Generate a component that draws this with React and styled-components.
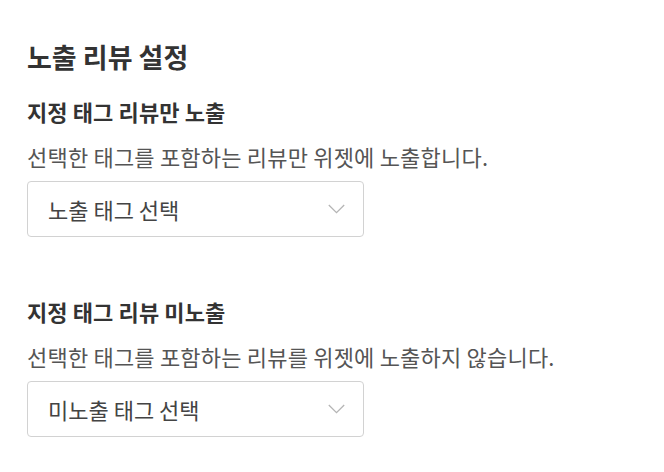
import styled, { createGlobalStyle } from "styled-components";

const GlobalStyle = createGlobalStyle`
  body {
    margin: 0;
    background: #ffffff;
    font-family: "Noto Sans CJK KR", "Noto Sans", sans-serif;
    color: #333333;
  }
`;

const Page = styled.div`
  padding: 39px 27px 24px;
`;

const Title = styled.h1`
  margin: 0 0 21px;
  font-size: 27px;
  font-weight: 700;
  line-height: 36px;
  color: #333333;
`;

const Section = styled.section`
  display: flex;
  flex-direction: column;
  margin-bottom: ${({ $gap }) => $gap || 0}px;
`;

const Label = styled.h2`
  margin: 0;
  font-size: 22px;
  font-weight: 700;
  line-height: 30px;
  letter-spacing: 0.1px;
  color: #333333;
`;

const Desc = styled.p`
  margin: 15px 0 10px;
  font-size: 22px;
  font-weight: 400;
  line-height: 30px;
  letter-spacing: 0.2px;
  color: #555555;
`;

const Select = styled.button`
  display: flex;
  align-items: center;
  justify-content: space-between;
  box-sizing: border-box;
  width: 337px;
  height: 56px;
  padding: 0 18px 0 20px;
  border: 1px solid #d2d2d2;
  border-radius: 4px;
  background: #ffffff;
  font-family: inherit;
  font-size: 22px;
  color: #444444;
  cursor: pointer;
`;

const Chevron = () => (
  <svg width="17" height="10" viewBox="0 0 17 10" fill="none">
    <path d="M0.8 1l7.7 7.7L16.2 1" stroke="#b5b5b5" strokeWidth="1.3" />
  </svg>
);

export default function App() {
  return (
    <Page>
      <GlobalStyle />
      <Title>노출 리뷰 설정</Title>
      <Section $gap={59}>
        <Label>지정 태그 리뷰만 노출</Label>
        <Desc>선택한 태그를 포함하는 리뷰만 위젯에 노출합니다.</Desc>
        <Select>
          노출 태그 선택
          <Chevron />
        </Select>
      </Section>
      <Section>
        <Label>지정 태그 리뷰 미노출</Label>
        <Desc>선택한 태그를 포함하는 리뷰를 위젯에 노출하지 않습니다.</Desc>
        <Select>
          미노출 태그 선택
          <Chevron />
        </Select>
      </Section>
    </Page>
  );
}
